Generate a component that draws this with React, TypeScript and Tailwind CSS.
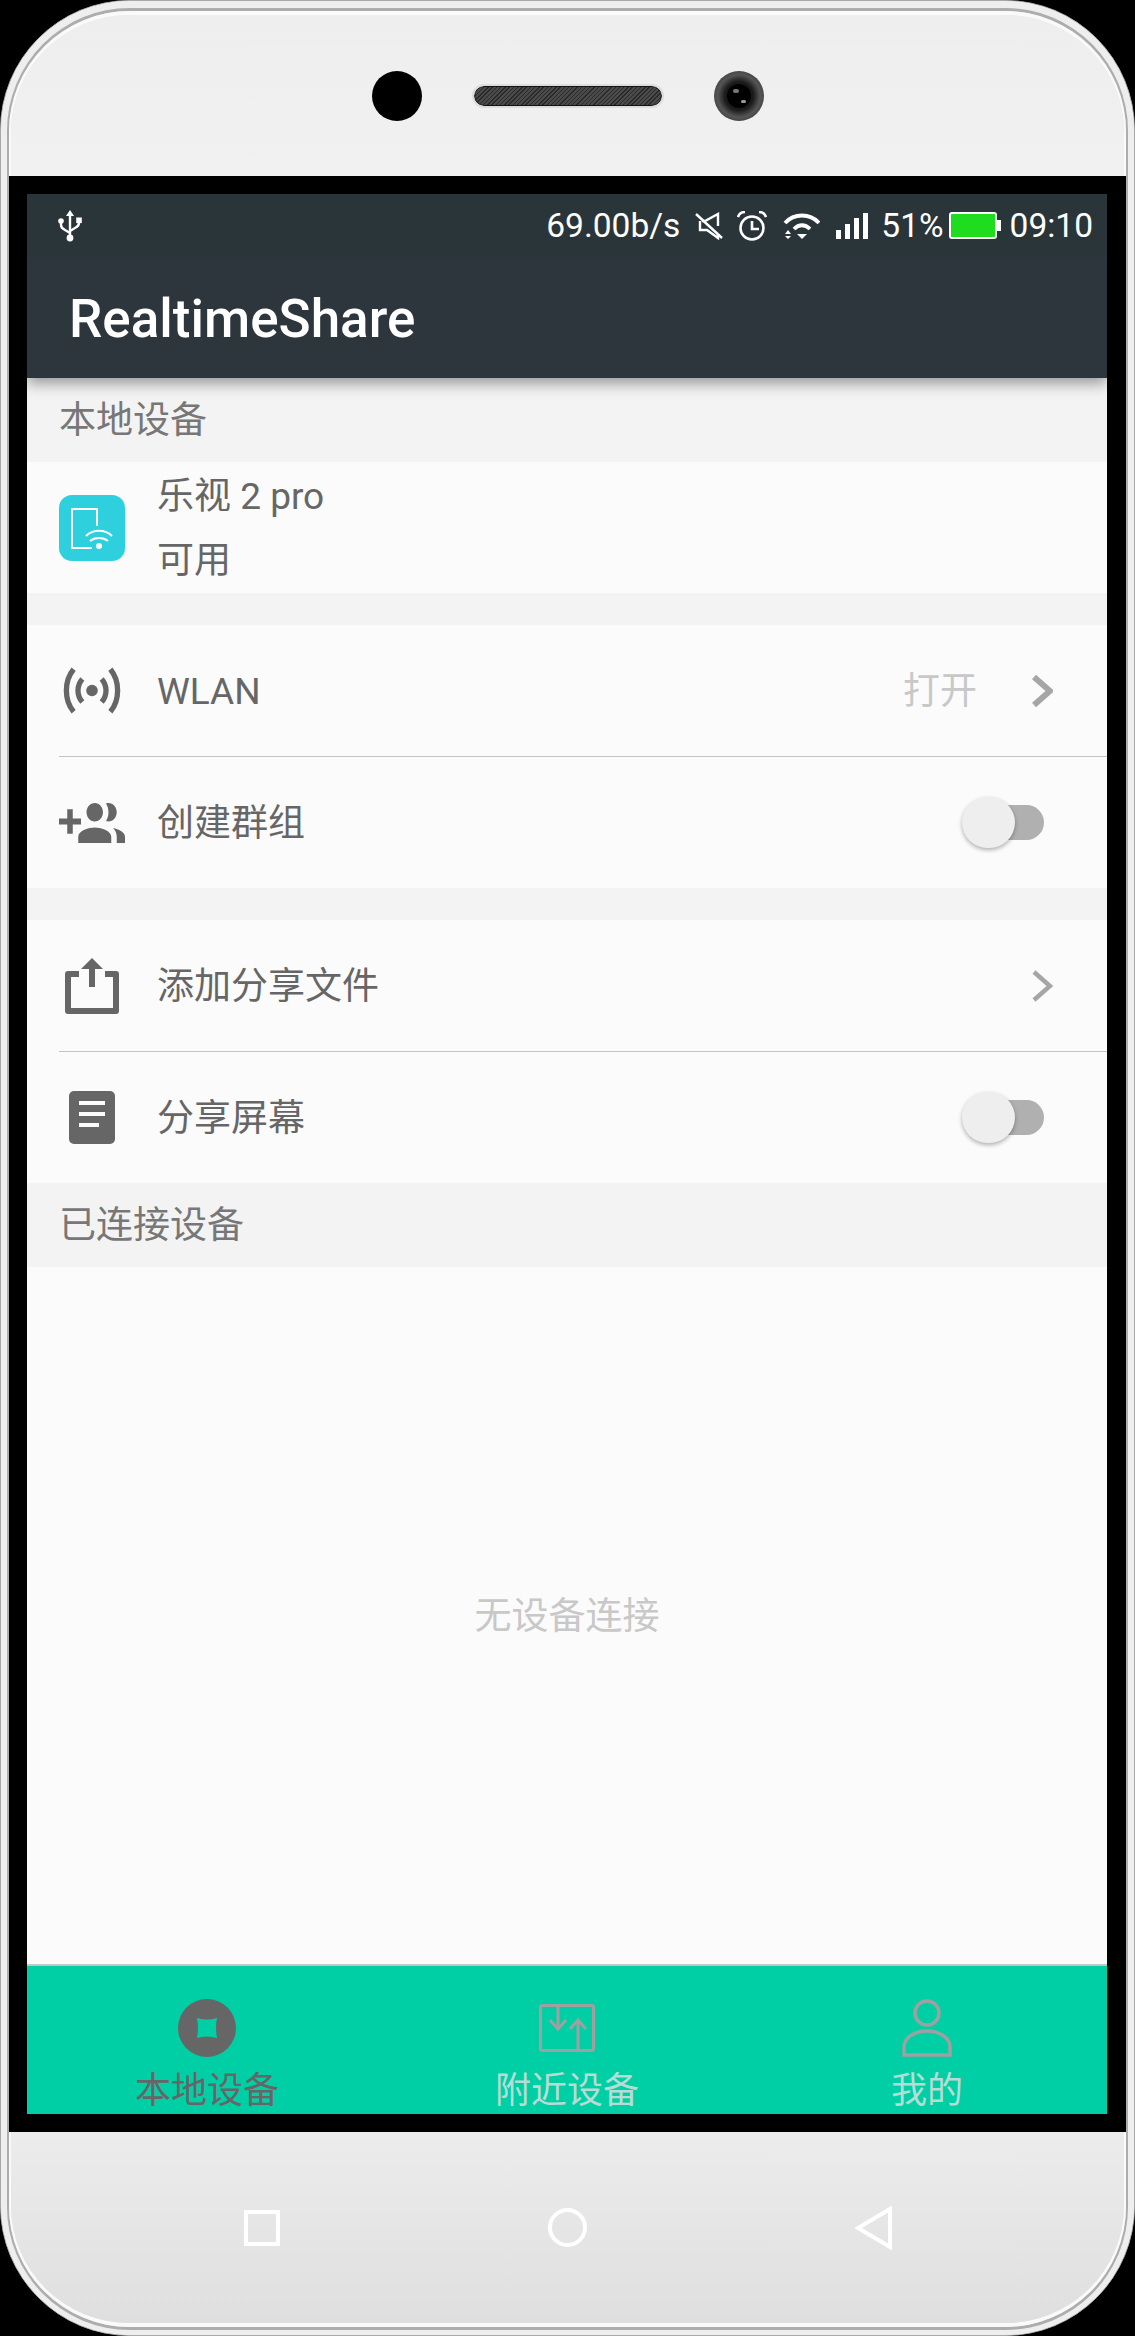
import React from 'react';

// Status bar glyphs
function UsbIcon() {
  return (
    <svg width="24" height="32" viewBox="0 0 24 32" fill="none" stroke="#fff" strokeWidth="2.4">
      <path d="M12 4v24" />
      <path d="M12 0l-4 6h8z" fill="#fff" stroke="none" />
      <circle cx="12" cy="28" r="3.4" fill="#fff" stroke="none" />
      <path d="M3 12v3c0 3 2 4 4 5l5 3" />
      <circle cx="3" cy="11" r="2.8" fill="#fff" stroke="none" />
      <path d="M21 11v2c0 3-2 4-4 5l-5 3" />
      <rect x="18.2" y="7.5" width="5.6" height="5.6" fill="#fff" stroke="none" />
    </svg>
  );
}

function MuteIcon() {
  return (
    <svg width="28" height="28" viewBox="0 0 28 28" fill="none" stroke="#fff" strokeWidth="2.4">
      <path d="M7 9h3L23 2v12" />
      <path d="M23 22v4L12 18H5V9" />
      <path d="M1 2l26 24" />
    </svg>
  );
}

function AlarmIcon() {
  return (
    <svg width="30" height="30" viewBox="0 0 30 30" fill="none" stroke="#fff" strokeWidth="2.6">
      <circle cx="15" cy="17" r="11.5" />
      <path d="M15 10v8h7" />
      <path d="M1 6c1-3 4-5 7-5M29 6c-1-3-4-5-7-5" />
    </svg>
  );
}

function WifiIcon() {
  return (
    <svg width="37" height="27" viewBox="0 0 37 27" fill="none" stroke="#fff" strokeWidth="3.8">
      <path d="M2 11C11 1 27 1 36 11" />
      <path d="M11 17c5-5 11-5 16 0" />
      <path d="M14 22h10l-5 5z" fill="#fff" stroke="none" />
      <path d="M2 22l3-4 3 4zM2 24l3 3 3-3z" fill="#fff" stroke="none" />
    </svg>
  );
}

function SignalIcon() {
  return (
    <svg width="32" height="26" viewBox="0 0 32 26" fill="#fff">
      <rect x="0" y="17" width="5" height="9" />
      <rect x="9" y="11" width="5" height="15" />
      <rect x="18" y="5" width="5" height="21" />
      <rect x="27" y="0" width="5" height="26" />
    </svg>
  );
}

function BatteryIcon() {
  return (
    <svg width="52" height="27" viewBox="0 0 52 27">
      <rect x="1" y="1" width="46" height="25" rx="2" fill="#1fdc1f" stroke="#fff" strokeWidth="2" />
      <rect x="48" y="8" width="4" height="11" fill="#fff" />
    </svg>
  );
}

// List row icons
function DeviceTile() {
  return (
    <svg width="66" height="66" viewBox="0 0 66 66" fill="none">
      <rect width="66" height="66" rx="13" fill="#2fd0de" />
      <path d="M38 31V14H13v39h20" stroke="#fff" strokeWidth="2" />
      <path d="M27 41c7-7 19-7 26 0M31 46c5-4 13-4 18 0" stroke="#fff" strokeWidth="2" />
      <circle cx="40" cy="51" r="3" fill="#fff" />
    </svg>
  );
}

function WlanIcon() {
  return (
    <svg width="58" height="47" viewBox="0 0 60 48" fill="none" stroke="#666" strokeWidth="5.5">
      <circle cx="30" cy="24" r="6" fill="#666" stroke="none" />
      <path d="M20 12c-6 7-6 17 0 24M40 12c6 7 6 17 0 24" />
      <path d="M11 2C1 14 1 34 11 46M49 2c10 12 10 32 0 44" />
    </svg>
  );
}

function GroupAddIcon() {
  return (
    <svg width="66" height="40" viewBox="0 5 24 13" preserveAspectRatio="none" fill="#666">
      <path d="M8 10H5V7H3v3H0v2h3v3h2v-3h3v-2zm10 1c1.66 0 2.99-1.34 2.99-3S19.66 5 18 5c-.32 0-.63.05-.91.14.57.81.9 1.79.9 2.86s-.34 2.04-.9 2.86c.28.09.59.14.91.14zm-5 0c1.66 0 2.99-1.34 2.99-3S14.66 5 13 5c-1.66 0-3 1.34-3 3s1.34 3 3 3zm6.62 2.16c.83.73 1.38 1.66 1.38 2.84v2h3v-2c0-1.54-2.37-2.49-4.38-2.84zM13 13c-2 0-6 1-6 3v2h12v-2c0-2-4-3-6-3z" />
    </svg>
  );
}

function ShareIcon() {
  return (
    <svg width="54" height="56" viewBox="0 0 54 56" fill="none" stroke="#666" strokeWidth="6">
      <path d="M14 16H3v37h48V16H40" strokeLinejoin="round" />
      <path d="M27 6v23" />
      <path d="M27 0l11 11H16z" fill="#666" stroke="none" />
    </svg>
  );
}

function DocIcon() {
  return (
    <svg width="46" height="53" viewBox="0 0 46 53">
      <rect width="46" height="53" rx="5" fill="#666" />
      <rect x="10" y="10" width="26" height="4" fill="#fbfbfb" />
      <rect x="10" y="21" width="26" height="4" fill="#fbfbfb" />
      <rect x="10" y="32" width="20" height="4" fill="#fbfbfb" />
    </svg>
  );
}

function Chevron({ weight }: { weight: number }) {
  return (
    <svg width="21" height="32" viewBox="0 0 21 32" fill="none" stroke="#a6a6a6" strokeWidth={weight}>
      <path d="M2 2l16 14L2 30" />
    </svg>
  );
}

// Tab bar icons
function LocalTabIcon() {
  return (
    <svg width="58" height="58" viewBox="0 0 58 58">
      <circle cx="29" cy="29" r="29" fill="#666" />
      <path d="M19 19q10 3 20 0q-2 10 0 20q-10-3-20 0q2-10 0-20z" fill="#00cfa6" />
    </svg>
  );
}

function NearbyTabIcon() {
  return (
    <svg width="56" height="48" viewBox="0 0 56 48" fill="none" stroke="#a0a0a0" strokeWidth="3">
      <rect x="1.5" y="1.5" width="53" height="45" rx="2" />
      <path d="M19 3v20M39 18v28" />
      <path d="M11 16l8 9 8-9M31 25l8-9 8 9" />
    </svg>
  );
}

function MineTabIcon() {
  return (
    <svg width="50" height="58" viewBox="0 0 50 58" fill="none" stroke="#a0a0a0" strokeWidth="3.5">
      <circle cx="25" cy="14" r="12" />
      <path d="M2 56V48c0-9 10-16 23-16s23 7 23 16v8z" />
    </svg>
  );
}

function Switch() {
  return (
    <div className="relative w-[82px] h-[51px] mr-[63px] flex items-center justify-end">
      <div className="w-[64px] h-[35px] rounded-full bg-[#b0b0b0]" />
      <div className="absolute left-0 top-0 w-[53px] h-[51px] rounded-full bg-[#eeeeee] shadow-[0_2px_4px_rgba(0,0,0,0.3)]" />
    </div>
  );
}

function Row({ icon, label, children }: { icon: React.ReactNode; label: string; children?: React.ReactNode }) {
  return (
    <div className="h-[131px] flex items-center bg-[#fbfbfb]">
      <div className="w-[66px] ml-[32px] flex justify-center">{icon}</div>
      <span className="ml-[32px] pt-[2px] flex-1 text-[37px] leading-none text-[#666666]">{label}</span>
      {children}
    </div>
  );
}

function SectionHeader({ label }: { label: string }) {
  return (
    <div className="h-[84px] flex items-center pl-[32px] pt-[2px] bg-[#f3f3f3] text-[37px] text-[#777777]">{label}</div>
  );
}

const tabs = [
  { label: '本地设备', icon: <LocalTabIcon />, active: true },
  { label: '附近设备', icon: <NearbyTabIcon />, active: false },
  { label: '我的', icon: <MineTabIcon />, active: false },
];

export default function App() {
  return (
    <div className="w-[1135px] h-[2336px] bg-black font-[Roboto,'Noto_Sans_CJK_SC',sans-serif]">
      {/* metal rim of the phone */}
      <div className="h-full rounded-[130px] border border-[#a8a8a8] bg-[#e4e4e4]">
        <div className="h-full rounded-[129px] border-x-[6px] border-t-[7px] border-b-[5px] border-[#eeeeee]">
          <div className="h-full rounded-[123px] border-x-[2px] border-t-[3px] border-b-[3px] border-[#adadad]">
            <div className="h-full rounded-[121px] border-x-[2px] border-t-[4px] border-b-[4px] border-[#fafafa] flex flex-col">
              {/* top bezel */}
              <div className="h-[161px] rounded-t-[118px] bg-linear-to-b from-[#eeeeee] to-[#f1f1f1] flex items-center justify-center gap-[52px]">
                <div className="w-[50px] h-[50px] rounded-full bg-black" />
                <div className="w-[188px] h-[20px] rounded-full border border-[#111111] outline-2 outline-[#dddddd] bg-[repeating-linear-gradient(135deg,#2a2a2a_0,#2a2a2a_1px,#4a4a4a_1px,#4a4a4a_3px)]" />
                <div className="w-[50px] h-[50px] rounded-full bg-[radial-gradient(circle,#1a1a1a_40%,#555555_60%,#222222_100%)] flex items-center justify-center">
                  <div className="relative w-[24px] h-[24px] rounded-full bg-black">
                    <div className="absolute left-[6px] top-[5px] w-[6px] h-[4px] rounded-full bg-[#777777]" />
                    <div className="absolute right-[5px] bottom-[5px] w-[5px] h-[3px] rounded-full bg-[#999999]" />
                  </div>
                </div>
              </div>

              {/* screen */}
              <div className="h-[1956px] -mx-[2px] bg-black pt-[18px] pb-[18px] pl-[18px] pr-[19px]">
                <div className="h-full flex flex-col overflow-hidden bg-[#fbfbfb]">
                  <div className="relative z-10 bg-[#2e363d] shadow-[0_5px_14px_rgba(0,0,0,0.4)]">
                    <div className="h-[63px] bg-[#2a353a] flex items-center text-white text-[33.5px] leading-none">
                      <div className="ml-[31px] flex-1">
                        <UsbIcon />
                      </div>
                      <span>69.00b/s</span>
                      <div className="ml-[15px]"><MuteIcon /></div>
                      <div className="ml-[14px]"><AlarmIcon /></div>
                      <div className="ml-[16px]"><WifiIcon /></div>
                      <div className="ml-[16px]"><SignalIcon /></div>
                      <span className="ml-[13px]">51%</span>
                      <div className="ml-[5px]"><BatteryIcon /></div>
                      <span className="ml-[9px] mr-[14px]">09:10</span>
                    </div>
                    <div className="h-[121px] flex items-center pl-[42px] pt-[3px] text-white text-[53px] font-medium leading-none">
                      RealtimeShare
                    </div>
                  </div>

                  <SectionHeader label="本地设备" />
                  <div className="h-[131px] flex items-center bg-[#fbfbfb]">
                    <div className="ml-[32px]"><DeviceTile /></div>
                    <div className="ml-[32px] pt-[2px] flex flex-col text-[37px] leading-[64px] text-[#666666]">
                      <span>乐视 2 pro</span>
                      <span>可用</span>
                    </div>
                  </div>
                  <div className="h-[32px] bg-[#f3f3f3]" />

                  <Row icon={<WlanIcon />} label="WLAN">
                    <span className="pt-[2px] text-[37px] leading-none text-[#c8c8c8]">打开</span>
                    <div className="ml-[55px] mr-[54px]"><Chevron weight={6} /></div>
                  </Row>
                  <div className="h-px ml-[32px] bg-[#c4c4c4]" />
                  <Row icon={<GroupAddIcon />} label="创建群组">
                    <Switch />
                  </Row>
                  <div className="h-[32px] bg-[#f3f3f3]" />

                  <Row icon={<ShareIcon />} label="添加分享文件">
                    <div className="mr-[54px]"><Chevron weight={4.5} /></div>
                  </Row>
                  <div className="h-px ml-[32px] bg-[#c4c4c4]" />
                  <Row icon={<DocIcon />} label="分享屏幕">
                    <Switch />
                  </Row>
                  <SectionHeader label="已连接设备" />

                  <div className="flex-1 pt-[2px] flex items-center justify-center text-[37px] text-[#c8c8c8]">无设备连接</div>

                  {/* tab bar */}
                  <div className="h-[150px] border-t-2 border-[#c2c8c6] bg-[#00cfa6] grid grid-cols-3">
                    {tabs.map((tab) => (
                      <div key={tab.label} className="flex flex-col items-center pt-[33px]">
                        <div className="h-[58px] flex items-center">{tab.icon}</div>
                        <span className={tab.active ? 'mt-[16px] text-[36px] leading-[36px] text-[#666666]' : 'mt-[16px] text-[36px] leading-[36px] text-[#b6dcd4]'}>
                          {tab.label}
                        </span>
                      </div>
                    ))}
                  </div>
                </div>
              </div>

              {/* bottom bezel with the system keys */}
              <div className="h-[191px] rounded-b-[118px] bg-linear-to-b from-[#ececec] to-[#dfdfdf] flex items-center justify-center gap-[268px]">
                <div className="w-[36px] h-[36px] border-4 border-white" />
                <div className="w-[39px] h-[39px] rounded-full border-4 border-white" />
                <svg width="37" height="44" viewBox="0 0 37 44" fill="none" stroke="#fff" strokeWidth="4">
                  <path d="M35 3L3 22l32 19z" />
                </svg>
              </div>
            </div>
          </div>
        </div>
      </div>
    </div>
  );
}
